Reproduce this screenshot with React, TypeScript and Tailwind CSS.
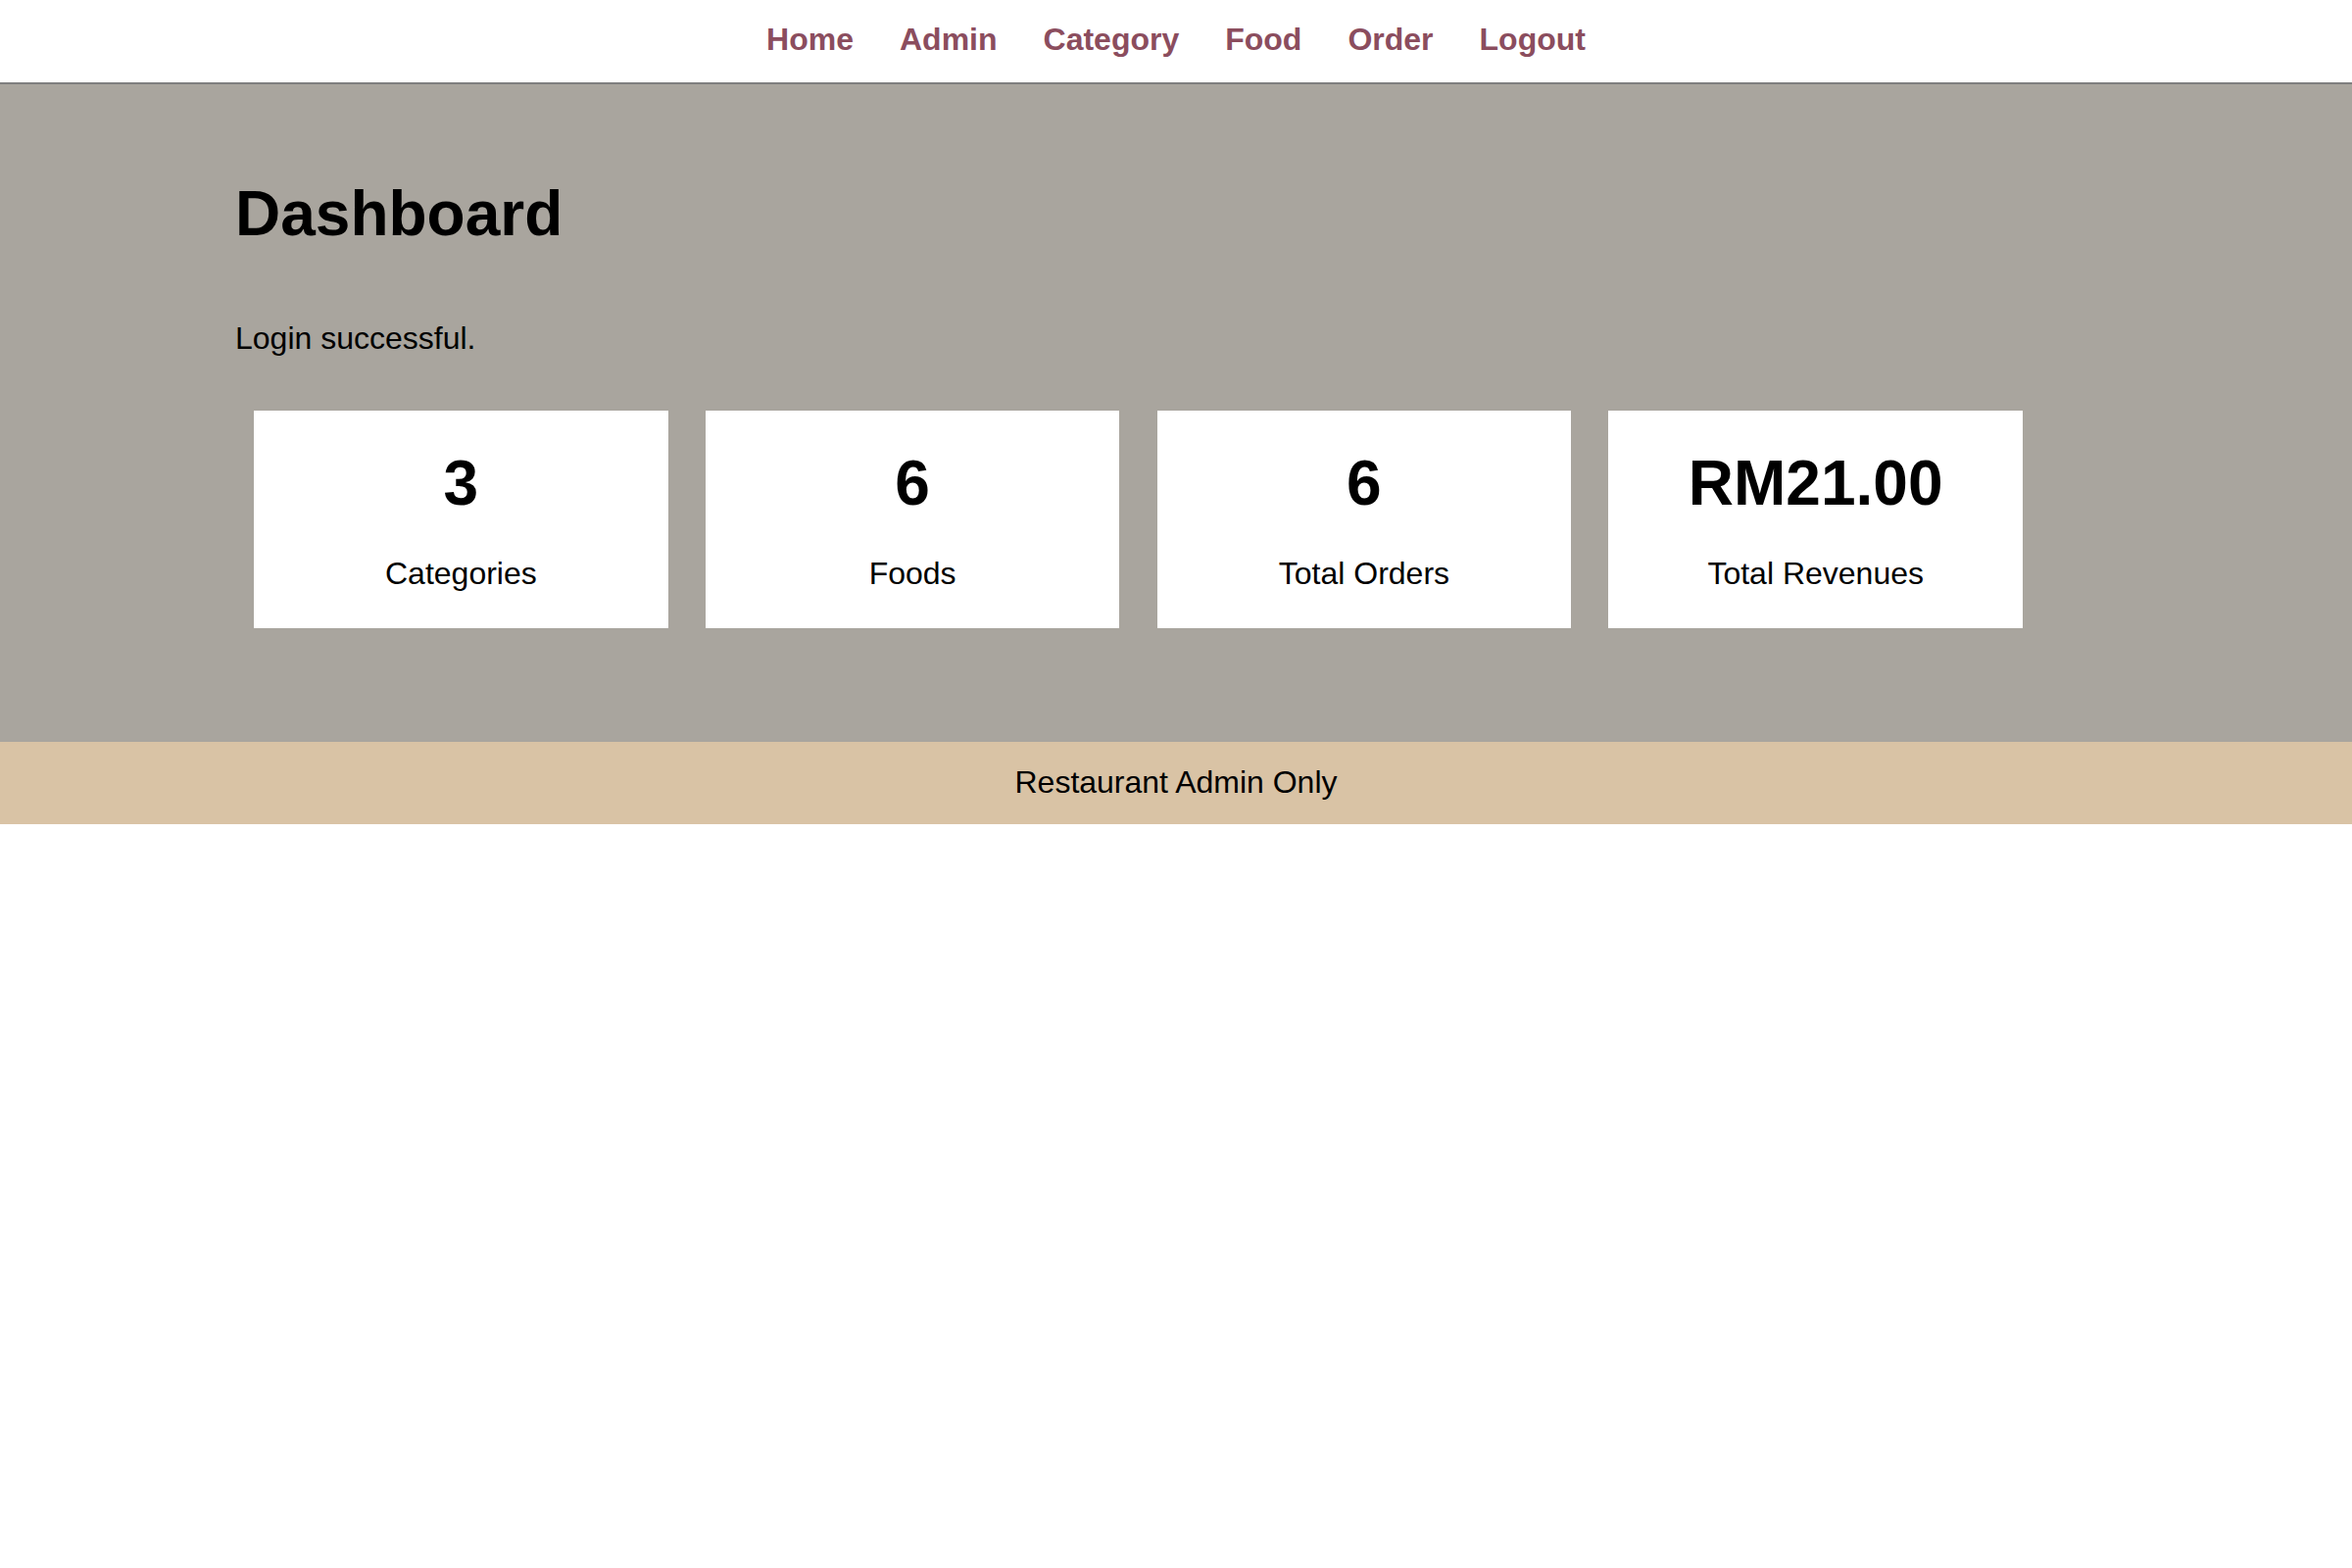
import React from "react";

const font = { fontFamily: '"Liberation Sans", Arial, sans-serif' };

export default function App() {
  const links = ["Home", "Admin", "Category", "Food", "Order", "Logout"];
  const stats = [
    { v: "3", l: "Categories" },
    { v: "6", l: "Foods" },
    { v: "6", l: "Total Orders" },
    { v: "RM21.00", l: "Total Revenues" },
  ];
  return (
    <div style={font} className="w-[2400px] bg-white text-black">
      <nav className="h-[86px] border-b-2 border-[#7f7f7f] bg-white pt-[22px]">
        <ul className="flex justify-center gap-[47px]">
          {links.map((t) => (
            <li key={t}>
              <a className="text-[32px] font-bold leading-[37px] text-[#8b4d5e]">{t}</a>
            </li>
          ))}
        </ul>
      </nav>
      <main className="h-[671px] bg-[#a9a59e] pt-[95px]">
        <div className="mx-auto w-[1920px]">
          <h1 className="text-[64px] font-bold leading-[74px]">Dashboard</h1>
          <p className="mt-[72px] text-[32px] leading-[37px]">Login successful.</p>
          <div className="mt-[55px] flex">
            {stats.map((s) => (
              <div
                key={s.l}
                className="mx-[19.2px] flex h-[222px] w-[422.4px] flex-col items-center bg-white pt-[37px]"
              >
                <div className="text-[64px] font-bold leading-[74px]">{s.v}</div>
                <div className="mt-[37px] text-[32px] leading-[37px]">{s.l}</div>
              </div>
            ))}
          </div>
        </div>
      </main>
      <footer className="flex h-[84px] items-center justify-center bg-[#d9c3a5] pb-[2px]">
        <p className="text-[32px] leading-[37px]">Restaurant Admin Only</p>
      </footer>
    </div>
  );
}
